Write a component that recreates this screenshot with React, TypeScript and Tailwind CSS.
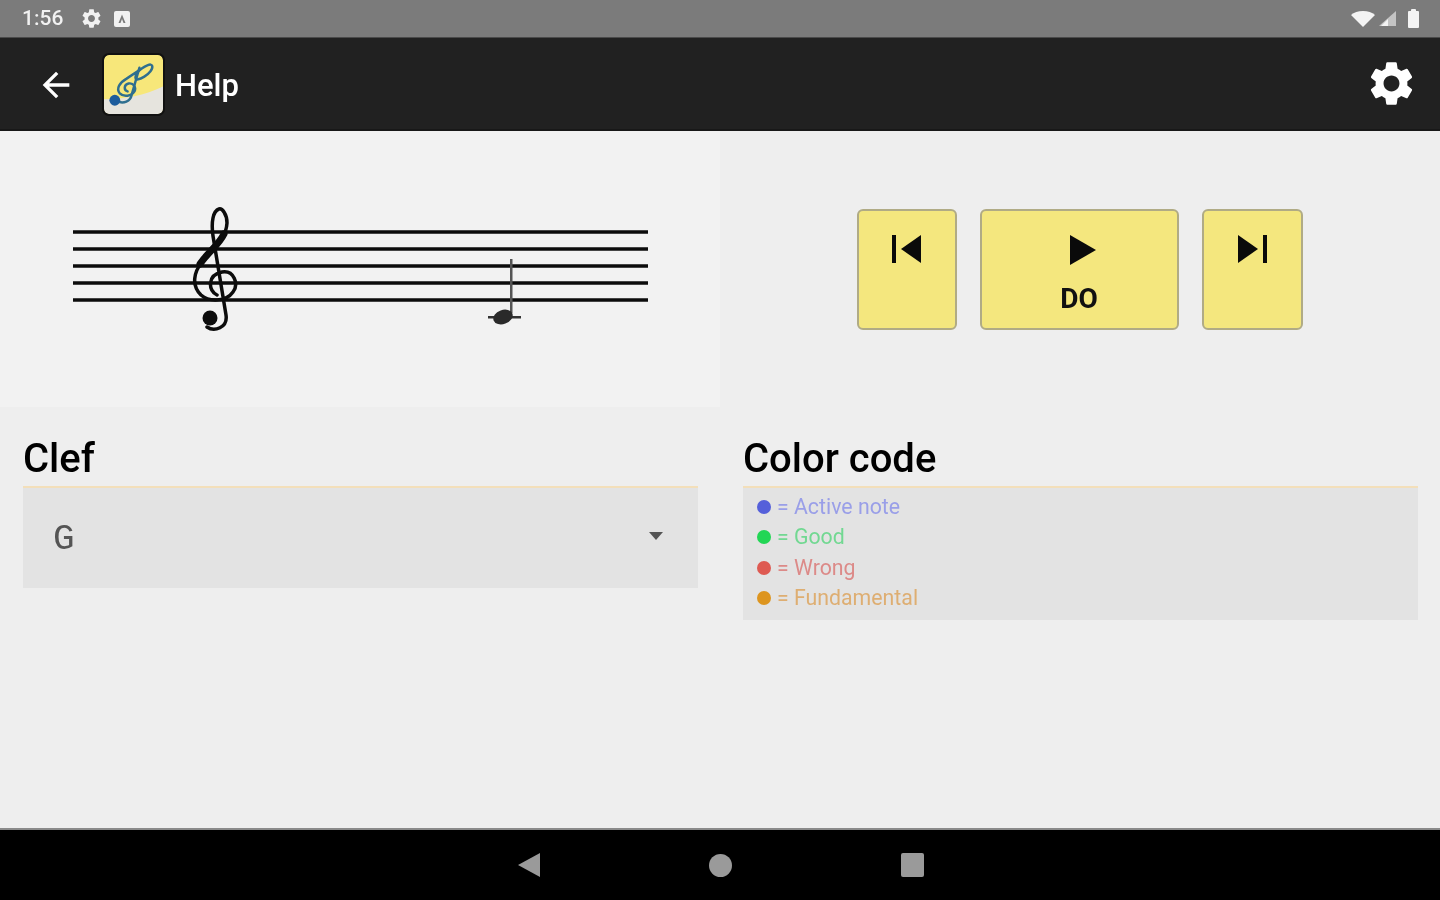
const GEAR = "M19.14 12.94c.04-.3.06-.61.06-.94 0-.32-.02-.64-.07-.94l2.03-1.58c.18-.14.23-.41.12-.61l-1.92-3.32c-.12-.22-.37-.29-.59-.22l-2.39.96c-.5-.38-1.03-.7-1.62-.94l-.36-2.54c-.04-.24-.24-.41-.48-.41h-3.84c-.24 0-.43.17-.47.41l-.36 2.54c-.59.24-1.13.57-1.62.94l-2.39-.96c-.22-.08-.47 0-.59.22L2.74 8.87c-.12.21-.08.47.12.61l2.03 1.58c-.05.3-.09.63-.09.94s.02.64.07.94l-2.03 1.58c-.18.14-.23.41-.12.61l1.92 3.32c.12.22.37.29.59.22l2.39-.96c.5.38 1.03.7 1.62.94l.36 2.54c.05.24.24.41.48.41h3.84c.24 0 .44-.17.47-.41l.36-2.54c.59-.24 1.13-.56 1.62-.94l2.39.96c.22.08.47 0 .59-.22l1.92-3.32c.12-.22.07-.47-.12-.61l-2.01-1.58zM12 15.6c-1.98 0-3.6-1.62-3.6-3.6s1.62-3.6 3.6-3.6 3.6 1.62 3.6 3.6-1.62 3.6-3.6 3.6z";

function StatusBar() {
  return (
    <div className="h-[38px] shrink-0 bg-[#7b7b7b] border-b border-[#4a4a4a] flex items-center pl-[22px] pr-[21px] text-[#f1f1f1]">
      <span className="text-[21px] font-medium w-[58px]">1:56</span>
      <svg viewBox="0 0 24 24" className="w-[23px] h-[23px]" fill="#f1f1f1"><path d={GEAR} /></svg>
      <svg viewBox="0 0 16 16" className="w-[16px] h-[16px] ml-[11px]"><rect x="0" y="0" width="16" height="16" rx="2" fill="#f1f1f1" /><path d="M8 3.500 11.500 12H9.500L8 8 6.500 12H4.500z" fill="#7b7b7b" /></svg>
      <div className="flex-1" />
      <svg viewBox="0 0 24 16" className="w-[24px] h-[16px]"><path d="M0 4C3 1.500 7 0 12 0s9 1.500 12 4L12 16z" fill="#f4f4f4" /></svg>
      <svg viewBox="0 0 17 15" className="w-[17px] h-[15px] ml-[4px]"><path d="M17 0V15H0z" fill="#c4c4c4" /><path d="M9 8V15H2z" fill="#f4f4f4" /></svg>
      <svg viewBox="0 0 11 19" className="w-[11px] h-[19px] ml-[12px]"><path d="M3 2V1a1 1 0 0 1 1-1h3a1 1 0 0 1 1 1v1h2a1 1 0 0 1 1 1v15a1 1 0 0 1-1 1H1a1 1 0 0 1-1-1V3a1 1 0 0 1 1-1z" fill="#f4f4f4" /></svg>
    </div>
  );
}

function AppIcon() {
  return (
    <svg viewBox="0 0 60 60" className="w-[59px] h-[59px] rounded-[5px] ml-[28px] mt-[2px] outline-2 outline-[#111]">
      <rect width="60" height="60" fill="#f7e77a" />
      <path d="M0 45C20 45 42 41 60 32V60H0z" fill="#e6e4de" />
      <g fill="none" stroke="#2f6f8f" strokeLinecap="round">
        <path d="M24 37c-4-1-4-7 1-8 5-1 8 4 6 8-3 5-11 6-15 2-4-5 0-11 7-15L38 14c4-3 10-6 11-3 1 3-3 8-8 11-5 3-9 4-9 1 0-2 2-6 6-9" strokeWidth="2.500" />
        <path d="M36 13 28 41C27 47 20 50 13 47" strokeWidth="2.500" />
      </g>
      <circle cx="11" cy="46" r="5.500" fill="#1d5c9c" />
    </svg>
  );
}

function Toolbar() {
  return (
    <div className="h-[93px] shrink-0 bg-[#212121] flex items-center border-b-2 border-[#181818]">
      <svg viewBox="0 0 24 24" className="w-[40px] h-[40px] ml-[36px] mt-[2px]" fill="#fff"><path d="M20 11H7.830l5.590-5.590L12 4l-8 8 8 8 1.410-1.410L7.830 13H20v-2z" /></svg>
      <AppIcon />
      <span className="ml-[12px] mt-[3px] text-[31px] leading-none font-medium text-white">Help</span>
      <div className="flex-1" />
      <svg viewBox="0 0 24 24" className="w-[53px] h-[53px] mr-[22px]" fill="#fff"><path d={GEAR} /></svg>
    </div>
  );
}

function Staff() {
  const lines = [232, 249, 266, 283, 300];
  return (
    <svg viewBox="0 131 720 276" className="w-[720px] h-[276px]">
      {lines.map((y) => (
        <rect key={y} x="73" y={y - 1.750} width="575" height="3.500" fill="#0c0c0c" />
      ))}
      <g fill="none" stroke="#0c0c0c" strokeLinecap="round">
        <path d="M217 295C208 291 207 275 222 272C234 270 239 284 233 292C226 302 209 302 201 295C191 285 194 272 202 262C211 250 226 241 227 223C227 214 222 208 219 209C213 211 211 222 213 236L226 315C228 328 214 332 207 327" strokeWidth="3.500" />
        <path d="M200 264C209 251 218 246 224 234" strokeWidth="7" />
      </g>
      <circle cx="210" cy="318" r="7.500" fill="#0c0c0c" />
      <rect x="510" y="259" width="2.500" height="54" fill="#555" />
      <rect x="488" y="316" width="33" height="2.500" fill="#333" />
      <ellipse cx="503" cy="317" rx="10" ry="7" transform="rotate(-20 503 317)" fill="#2a2a2a" />
    </svg>
  );
}

function PlayerButton({ size, children }: { size: string; children: React.ReactNode }) {
  return (
    <div className={`h-[121px] rounded-[6px] border-2 border-[#b0ab85] bg-[#f4e77e] flex flex-col items-center pt-[24px] ${size}`}>
      {children}
    </div>
  );
}

function Section({ title, children }: { title: string; children: React.ReactNode }) {
  return (
    <div className="flex-1 pl-[23px] pr-[22px] pt-[29px]">
      <h2 className="text-[40px] leading-[46px] font-medium text-black h-[52px] border-b-2 border-[#f3dfba]">{title}</h2>
      {children}
    </div>
  );
}

const LEGEND = [
  { dot: "bg-[#5560da]", text: "text-[#9a9fe8]", label: "= Active note" },
  { dot: "bg-[#22d655]", text: "text-[#72d892]", label: "= Good" },
  { dot: "bg-[#de5a52]", text: "text-[#dc8a88]", label: "= Wrong" },
  { dot: "bg-[#dd951f]", text: "text-[#deae72]", label: "= Fundamental" },
];

export default function App() {
  return (
    <div className="w-[1440px] h-[900px] flex flex-col overflow-hidden bg-[#eeeeee] blur-[0.7px] font-['Roboto',sans-serif]">
      <StatusBar />
      <Toolbar />
      <div className="flex-1 flex flex-col">
        <div className="flex h-[276px]">
          <div className="w-[720px] bg-[#f2f2f2]">
            <Staff />
          </div>
          <div className="flex-1 flex items-center justify-center gap-[23px] pr-[1px]">
            <PlayerButton size="w-[100px]">
              <svg viewBox="0 0 30 28" className="w-[30px] h-[28px]" fill="#0a0a0a"><rect x="0" y="0" width="4" height="28" /><path d="M29 0V28L9 14z" /></svg>
            </PlayerButton>
            <PlayerButton size="w-[199px]">
              <svg viewBox="0 0 26 30" className="w-[26px] h-[30px] ml-[7px]" fill="#0a0a0a"><path d="M0 0V30L26 15z" /></svg>
              <span className="text-[28px] leading-[32px] font-bold text-[#111] mt-[18px]">DO</span>
            </PlayerButton>
            <PlayerButton size="w-[101px]">
              <svg viewBox="0 0 30 28" className="w-[30px] h-[28px]" fill="#0a0a0a"><rect x="26" y="0" width="4" height="28" /><path d="M1 0V28L21 14z" /></svg>
            </PlayerButton>
          </div>
        </div>
        <div className="flex">
          <Section title="Clef">
            <div className="h-[100px] bg-[#e3e3e3] flex items-center justify-between pl-[30px] pr-[35px]">
              <span className="text-[36px] mt-[3px] text-[#555] font-['Liberation_Mono',monospace]">G</span>
              <svg viewBox="0 0 14 8" className="w-[14px] h-[8px] mb-[4px]" fill="#555"><path d="M0 0H14L7 8z" /></svg>
            </div>
          </Section>
          <Section title="Color code">
            <div className="h-[132px] bg-[#e3e3e3] pl-[14px] pt-[4px]">
              {LEGEND.map((l) => (
                <div key={l.label} className="h-[30.300px] flex items-center gap-[6px]">
                  <span className={`w-[14px] h-[14px] rounded-full ${l.dot}`} />
                  <span className={`text-[21.300px] leading-none -mt-[1px] ${l.text}`}>{l.label}</span>
                </div>
              ))}
            </div>
          </Section>
        </div>
      </div>
      <div className="h-[72px] shrink-0 bg-black border-t-2 border-[#8a8a8a] flex items-center justify-center gap-[169px] pl-[2px]">
        <svg viewBox="0 0 22 24" className="w-[22px] h-[24px]" fill="#9a9a9a"><path d="M22 0V24L0 12z" /></svg>
        <span className="w-[23px] h-[23px] rounded-full bg-[#9a9a9a]" />
        <span className="w-[23px] h-[24px] rounded-[2px] bg-[#9a9a9a]" />
      </div>
    </div>
  );
}
